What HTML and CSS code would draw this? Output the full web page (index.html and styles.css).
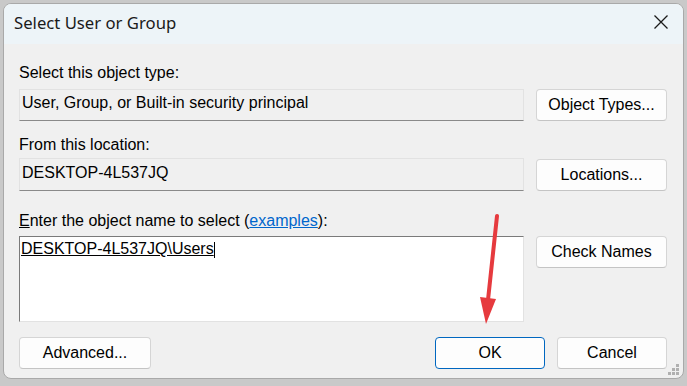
FILE: index.html
```html
<!DOCTYPE html>
<html lang="en">
<head>
    <meta charset="UTF-8">
    <title>Select User or Group</title>
    <link rel="stylesheet" href="styles.css">
</head>
<body>
<div class="window">
    <div class="titlebar">
        <span class="title">Select User or Group</span>
        <span class="close">
            <svg width="14" height="14" viewBox="0 0 14 14"><path d="M0.5 0.5 L13.5 13.5 M13.5 0.5 L0.5 13.5" stroke="#1a1a1a" stroke-width="1.3" fill="none"/></svg>
        </span>
    </div>
    <div class="content">
        <div class="label first">Select this object type:</div>
        <div class="row">
            <div class="field">User, Group, or Built-in security principal</div>
            <button class="btn">Object Types...</button>
        </div>
        <div class="label second">From this location:</div>
        <div class="row tall">
            <div class="field">DESKTOP-4L537JQ</div>
            <button class="btn">Locations...</button>
        </div>
        <div class="label third"><u>E</u>nter the object name to select (<a href="#">examples</a>):</div>
        <div class="row big">
            <div class="textbox"><span class="name">DESKTOP-4L537JQ\Users</span><span class="caret"></span></div>
            <button class="btn">Check Names</button>
        </div>
        <div class="footer">
            <button class="btn advanced">Advanced...</button>
            <div class="actions">
                <button class="btn ok">OK</button>
                <button class="btn cancel">Cancel</button>
            </div>
        </div>
    </div>
    <svg class="grip" width="12" height="12" viewBox="0 0 12 12">
        <rect x="8" y="0" width="3" height="3" fill="#b0b0b0"/>
        <rect x="4" y="4" width="3" height="3" fill="#b0b0b0"/>
        <rect x="8" y="4" width="3" height="3" fill="#b0b0b0"/>
        <rect x="0" y="8" width="3" height="3" fill="#b0b0b0"/>
        <rect x="4" y="8" width="3" height="3" fill="#b0b0b0"/>
        <rect x="8" y="8" width="3" height="3" fill="#b0b0b0"/>
    </svg>
</div>
<svg class="arrow" width="40" height="120" viewBox="0 0 40 120">
    <line x1="28" y1="6" x2="19" y2="90" stroke="#e63a3e" stroke-width="4" stroke-linecap="round"/>
    <polygon points="11,87 27,89 17,114" fill="#e63a3e"/>
</svg>
</body>
</html>
```

FILE: styles.css
```css
body {
    margin: 0;
    background: #c9c9c9;
    font-family: "Liberation Sans", Arial, sans-serif;
    font-size: 16px;
    color: #000;
    height: 386px;
    overflow: hidden;
    position: relative;
}
.window {
    position: relative;
    margin: 3px 0 0 3px;
    width: 679px;
    height: 374px;
    background: #f0f0f0;
    border: 1px solid #a9a9a9;
    border-radius: 8px;
    overflow: hidden;
}
.titlebar {
    height: 40px;
    background: #edf4f8;
    display: flex;
    align-items: center;
    justify-content: space-between;
    padding: 0 15px 0 10px;
}
.title {
    font-family: "Noto Sans", "Open Sans", sans-serif;
    font-size: 16.7px;
    color: #1a1a1a;
    margin-top: -3px;
}
.close {
    display: flex;
    margin-top: -4px;
}
.content {
    padding: 20px 16px 0 15px;
}
.label {
    line-height: 18px;
}
.label.second {
    margin-top: 15px;
}
.label.third {
    margin-top: 21px;
}
.label a {
    color: #0066cc;
}
.row {
    display: grid;
    grid-template-columns: 505px 131px;
    column-gap: 12px;
    align-items: start;
    margin-top: 7px;
}
.row.tall {
    margin-top: 4px;
}
.row.big {
    margin-top: 6px;
}
.field {
    height: 32px;
    box-sizing: border-box;
    border: 1px solid #e2e2e2;
    border-bottom-color: #8a8a8a;
    padding: 4px 2px 0;
    line-height: 18px;
    white-space: nowrap;
}
.row.tall .field {
    height: 33px;
    padding-top: 5px;
}
.textbox {
    height: 86px;
    box-sizing: border-box;
    background: #fff;
    border: 1px solid #e2e2e2;
    border-top-color: #7a7a7a;
    border-left-color: #7a7a7a;
    padding: 3px 1px 0;
    line-height: 18px;
    display: flex;
    align-items: flex-start;
}
.name {
    text-decoration: underline;
    text-underline-offset: 1px;
}
.caret {
    display: inline-block;
    width: 1px;
    height: 16px;
    background: #000;
    margin-top: 2px;
}
.btn {
    height: 32px;
    box-sizing: border-box;
    background: #fdfdfd;
    border: 1px solid #d5d5d5;
    border-bottom-color: #c4c4c4;
    border-radius: 4px;
    font-family: inherit;
    font-size: 16px;
    color: #000;
    padding: 0;
    display: flex;
    align-items: center;
    justify-content: center;
}
.row.tall .btn {
    margin-top: 1px;
}
.footer {
    display: flex;
    justify-content: space-between;
    margin-top: 15px;
}
.advanced {
    width: 132px;
}
.actions {
    display: flex;
    gap: 12px;
}
.ok {
    width: 110px;
    border: 1px solid #0067c0;
}
.cancel {
    width: 110px;
}
.grip {
    position: absolute;
    right: 3px;
    bottom: 2px;
}
.arrow {
    position: absolute;
    left: 469px;
    top: 210px;
}
```
